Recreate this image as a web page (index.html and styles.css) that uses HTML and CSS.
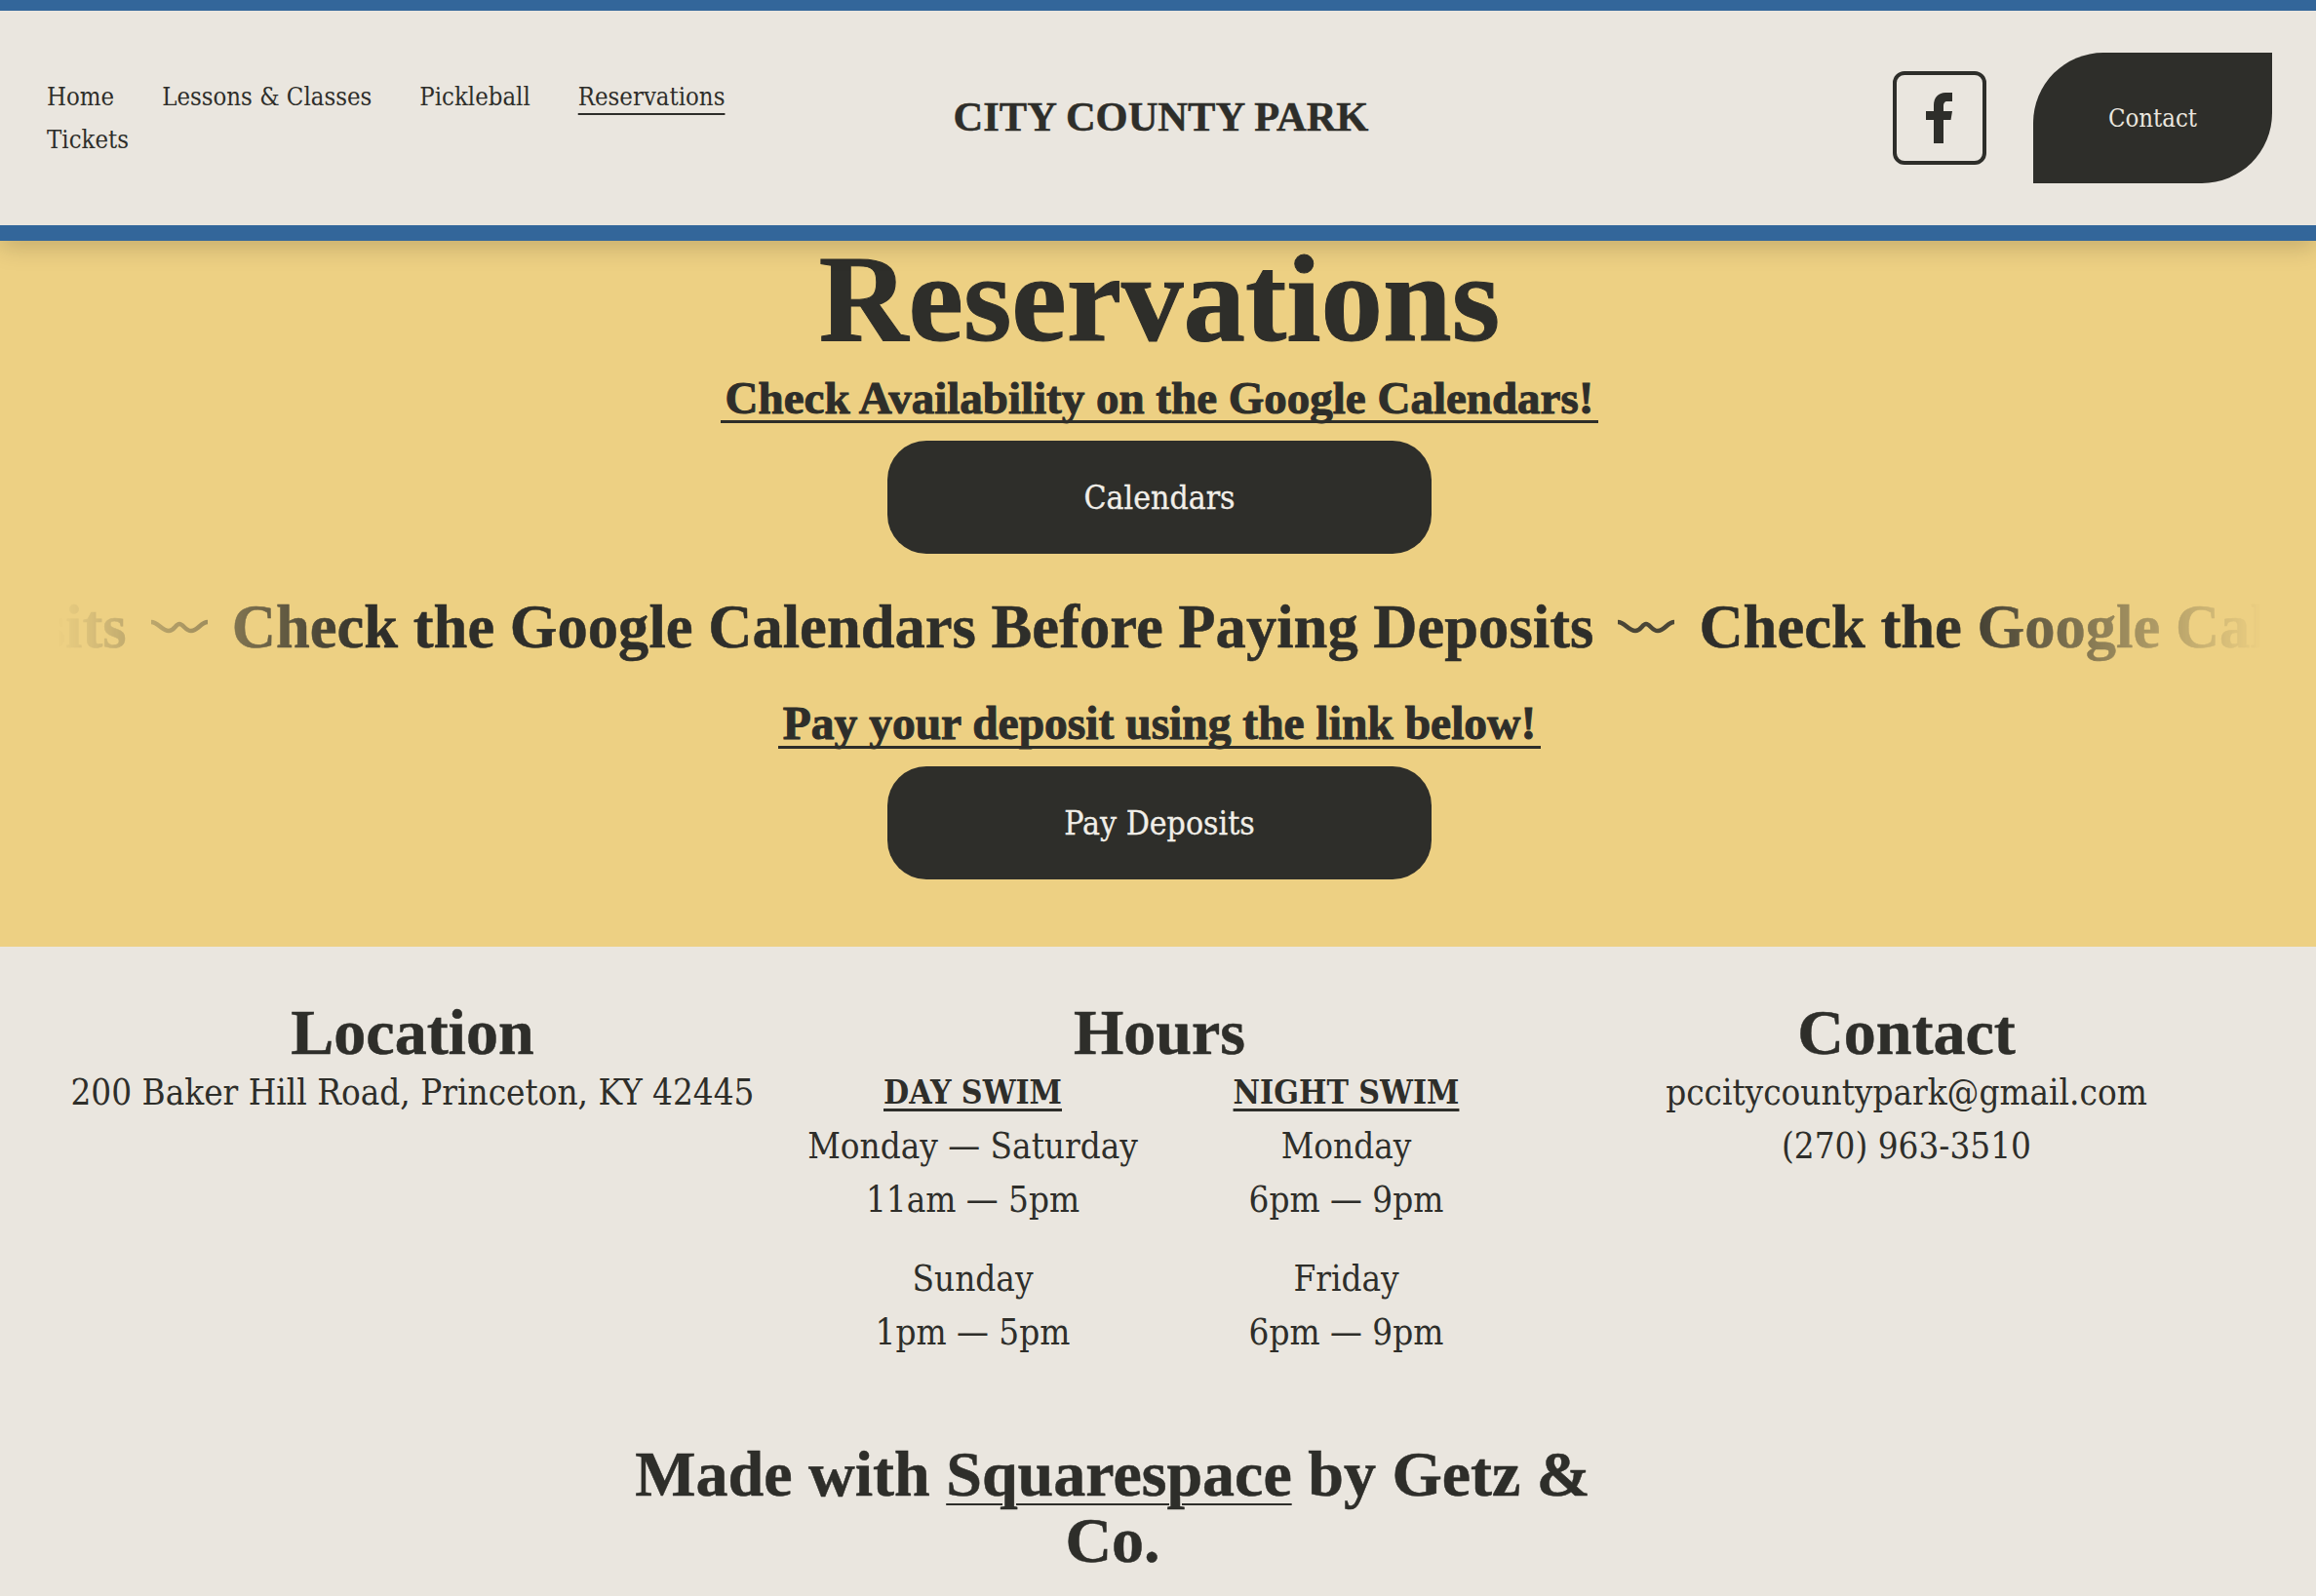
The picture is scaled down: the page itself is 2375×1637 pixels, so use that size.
FILE: index.html
```html
<!DOCTYPE html>
<html lang="en">
<head>
    <meta charset="UTF-8">
    <meta name="viewport" content="width=device-width, initial-scale=1.0">
    <title>Reservations - City County Park</title>
    <link rel="stylesheet" href="styles.css">
</head>
<body>
    <header class="site-header">
        <nav class="main-nav">
            <a href="#">Home</a>
            <a href="#">Lessons &amp; Classes</a>
            <a href="#">Pickleball</a>
            <a href="#" class="active">Reservations</a>
            <a href="#">Tickets</a>
        </nav>
        <div class="site-title">CITY COUNTY PARK</div>
        <div class="header-actions">
            <a href="#" class="fb-link" aria-label="Facebook">
                <svg width="96" height="96" viewBox="0 0 96 96">
                    <rect x="2" y="2" width="92" height="92" rx="10" fill="none" stroke="#2e2e2a" stroke-width="4"/>
                    <path d="M42 74V50H34V41H42V35C42 27 47 22 54 22H61V31H56C53 31 52 33 52 36V41H61L59.500 50H52V74Z" fill="#2e2e2a"/>
                </svg>
            </a>
            <a href="#" class="contact-btn">Contact</a>
        </div>
    </header>

    <main class="reservations">
        <h1>Reservations</h1>
        <h3 class="link-heading"><a href="#">Check Availability on the Google Calendars!</a></h3>
        <a href="#" class="big-btn">Calendars</a>

        <div class="marquee">
            <div class="marquee-track">
                <span>Check the Google Calendars Before Paying Deposits</span>
                <svg class="wave" width="60" height="16" viewBox="0 0 60 16"><path d="M1 3C8 3 12 12 19 12C25 12 26 5 30 5C34 5 36 12 42 12C49 12 52 3 59 3"/></svg>
                <span>Check the Google Calendars Before Paying Deposits</span>
                <svg class="wave" width="60" height="16" viewBox="0 0 60 16"><path d="M1 3C8 3 12 12 19 12C25 12 26 5 30 5C34 5 36 12 42 12C49 12 52 3 59 3"/></svg>
                <span>Check the Google Calendars Before Paying Deposits</span>
            </div>
        </div>

        <h3 class="link-heading second"><a href="#">Pay your deposit using the link below!</a></h3>
        <a href="#" class="big-btn">Pay Deposits</a>
    </main>

    <footer class="site-footer">
        <div class="footer-cols">
            <section class="footer-col">
                <h2>Location</h2>
                <p>200 Baker Hill Road, Princeton, KY 42445</p>
            </section>
            <section class="footer-col">
                <h2>Hours</h2>
                <div class="hours">
                    <div class="hours-col">
                        <p class="swim-title">DAY SWIM</p>
                        <p>Monday — Saturday</p>
                        <p>11am — 5pm</p>
                        <p class="gap">Sunday</p>
                        <p>1pm — 5pm</p>
                    </div>
                    <div class="hours-col">
                        <p class="swim-title">NIGHT SWIM</p>
                        <p>Monday</p>
                        <p>6pm — 9pm</p>
                        <p class="gap">Friday</p>
                        <p>6pm — 9pm</p>
                    </div>
                </div>
            </section>
            <section class="footer-col">
                <h2>Contact</h2>
                <p>pccitycountypark@gmail.com</p>
                <p>(270) 963-3510</p>
            </section>
        </div>
        <p class="made-with">Made with <a href="#">Squarespace</a> by Getz &amp; Co.</p>
    </footer>
</body>
</html>
```

FILE: styles.css
```css
body {
    margin: 0;
    height: 100vh;
    overflow: hidden;
    font-family: "DejaVu Serif Condensed", "DejaVu Serif", serif;
    background: #eae6df;
    color: #2e2e2a;
}
a {
    color: inherit;
    text-decoration: none;
}
h1, h2, h3, p {
    margin: 0;
    font-weight: normal;
}

/* header */
.site-header {
    position: relative;
    z-index: 2;
    display: grid;
    grid-template-columns: 1fr auto 1fr;
    align-items: center;
    height: 220px;
    padding: 0 45px 0 48px;
    border-top: 11px solid #33669a;
    border-bottom: 16px solid #33669a;
    box-shadow: 0 6px 24px rgba(0, 0, 0, 0.18);
    background: #eae6df;
}
.main-nav {
    display: flex;
    flex-wrap: wrap;
    gap: 0 49px;
    font-size: 25.500px;
    line-height: 44px;
    max-width: 760px;
    margin-top: -1px;
}
.main-nav .active {
    text-decoration: underline;
    text-decoration-thickness: 2px;
    text-underline-offset: 8px;
}
.site-title {
    font-family: "Liberation Serif", serif;
    font-weight: bold;
    font-size: 42.500px;
    -webkit-text-stroke: 0.5px #2e2e2a;
    margin: -4px 0 0 3px;
}
.header-actions {
    display: flex;
    justify-content: flex-end;
    align-items: center;
    gap: 48px;
}
.fb-link {
    display: block;
    height: 96px;
}
.contact-btn {
    display: flex;
    align-items: center;
    justify-content: center;
    width: 245px;
    height: 134px;
    background: #2e2e2a;
    color: #eae6df;
    font-size: 25.500px;
    border-radius: 72px 0 72px 0;
}

/* yellow section */
.reservations {
    display: flex;
    flex-direction: column;
    align-items: center;
    height: 724px;
    padding-left: 3px;
    background: #edd083;
}
.reservations h1 {
    font-family: "Liberation Serif", serif;
    font-weight: bold;
    font-size: 127px;
    line-height: 112px;
    -webkit-text-stroke: 1px #2e2e2a;
    margin-top: 3px;
}
.link-heading {
    font-family: "Liberation Serif", serif;
    font-weight: bold;
    font-size: 47px;
    line-height: 46px;
    margin-top: 23px;
    -webkit-text-stroke: 1px #2e2e2a;
}
.link-heading a {
    display: block;
    padding: 0 5px;
    height: 46px;
    border-bottom: 3px solid #2e2e2a;
}
.link-heading.second {
    margin-top: 31px;
    font-size: 47.500px;
}
.big-btn {
    display: flex;
    align-items: center;
    justify-content: center;
    width: 558px;
    height: 116px;
    margin-top: 18px;
    border-radius: 40px;
    background: #2e2e2a;
    color: #f1eee8;
    font-size: 33.500px;
    -webkit-text-stroke: 0.3px #f1eee8;
}
.marquee {
    width: 2260px;
    margin-top: 30px;
    overflow: hidden;
    -webkit-mask-image: linear-gradient(to right, transparent 0, #000 320px, #000 1930px, transparent 100%);
    mask-image: linear-gradient(to right, transparent 0, #000 320px, #000 1930px, transparent 100%);
}
.marquee-track {
    display: flex;
    align-items: center;
    gap: 24px;
    width: max-content;
    transform: translateX(-1326px);
    font-family: "Liberation Serif", serif;
    font-weight: bold;
    font-size: 62.600px;
    line-height: 90px;
    -webkit-text-stroke: 0.5px #2e2e2a;
    white-space: nowrap;
}
.wave {
    flex: none;
    fill: none;
    stroke: #2e2e2a;
    stroke-width: 4.500;
    opacity: 0.85;
}

/* footer */
.footer-cols {
    display: grid;
    grid-template-columns: repeat(3, 766px);
    padding-left: 40px;
    padding-top: 53px;
    text-align: center;
    font-size: 36.500px;
    line-height: 55px;
}
.footer-col h2 {
    font-family: "Liberation Serif", serif;
    font-weight: bold;
    font-size: 66px;
    line-height: 69px;
    -webkit-text-stroke: 0.5px #2e2e2a;
}
.hours {
    display: grid;
    grid-template-columns: 383px 383px;
    line-height: 55px;
}
.swim-title {
    font-weight: bold;
    font-size: 33.500px;
    text-decoration: underline;
    text-decoration-thickness: 3px;
    text-underline-offset: 5px;
}
.hours-col p.gap {
    margin-top: 26px;
}
.made-with {
    width: 1028px;
    margin: 84px 0 0 627px;
    text-align: center;
    font-family: "Liberation Serif", serif;
    font-weight: bold;
    font-size: 66px;
    line-height: 68px;
    -webkit-text-stroke: 0.5px #2e2e2a;
}
.made-with a {
    text-decoration: underline;
    text-decoration-thickness: 2px;
    text-underline-offset: 8px;
}
```
